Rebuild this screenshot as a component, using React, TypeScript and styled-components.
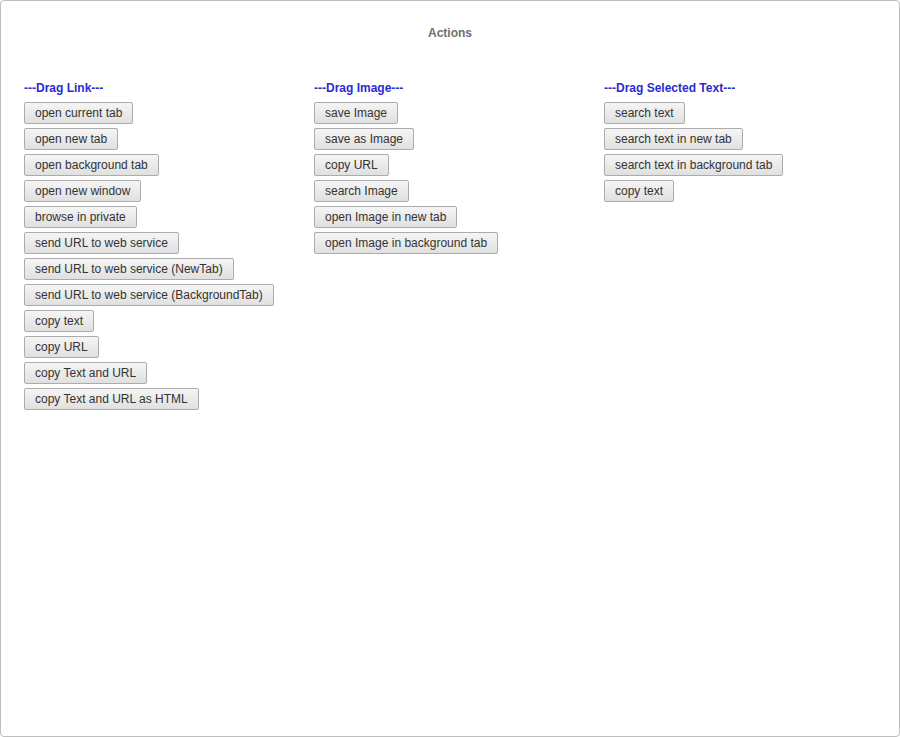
import styled, { createGlobalStyle } from "styled-components";

const GlobalStyle = createGlobalStyle`
	html, body {
		margin: 0;
		padding: 0;
		background: #fff;
	}
	* {
		box-sizing: border-box;
	}
`;

const Frame = styled.div`
	width: 900px;
	height: 737px;
	border: 1px solid #bdbdbd;
	border-radius: 4px;
	padding: 25px 0 0 23px;
	font-family: "Liberation Sans", Arial, sans-serif;
`;

const Heading = styled.h1`
	margin: 0 0 41px -23px;
	font-size: 12px;
	line-height: 14px;
	font-weight: bold;
	color: #6e6e6e;
	text-align: center;
`;

const Columns = styled.div`
	display: grid;
	grid-template-columns: 290px 290px 290px;
`;

const Column = styled.section`
	display: flex;
	flex-direction: column;
	align-items: flex-start;
	gap: 4px;
`;

const Title = styled.h2`
	margin: 0 0 3px;
	font-size: 12px;
	line-height: 14px;
	font-weight: bold;
	color: #2b2bd0;
`;

const ActionButton = styled.button`
	height: 22px;
	padding: 0 10px;
	border: 1px solid #acacac;
	border-radius: 2px;
	background: linear-gradient(#f5f5f5, #e0e0e0);
	color: #333;
	font-family: "Liberation Sans", Arial, sans-serif;
	font-size: 12px;
	line-height: 20px;
	cursor: pointer;
`;

const groups = [
	{
		title: "---Drag Link---",
		actions: [
			"open current tab",
			"open new tab",
			"open background tab",
			"open new window",
			"browse in private",
			"send URL to web service",
			"send URL to web service (NewTab)",
			"send URL to web service (BackgroundTab)",
			"copy text",
			"copy URL",
			"copy Text and URL",
			"copy Text and URL as HTML",
		],
	},
	{
		title: "---Drag Image---",
		actions: [
			"save Image",
			"save as Image",
			"copy URL",
			"search Image",
			"open Image in new tab",
			"open Image in background tab",
		],
	},
	{
		title: "---Drag Selected Text---",
		actions: [
			"search text",
			"search text in new tab",
			"search text in background tab",
			"copy text",
		],
	},
];

const App = () => {
	return (
		<>
			<GlobalStyle />
			<Frame>
				<Heading>Actions</Heading>
				<Columns>
					{groups.map((group) => (
						<Column key={group.title}>
							<Title>{group.title}</Title>
							{group.actions.map((action) => (
								<ActionButton key={action}>{action}</ActionButton>
							))}
						</Column>
					))}
				</Columns>
			</Frame>
		</>
	);
};

export default App;
